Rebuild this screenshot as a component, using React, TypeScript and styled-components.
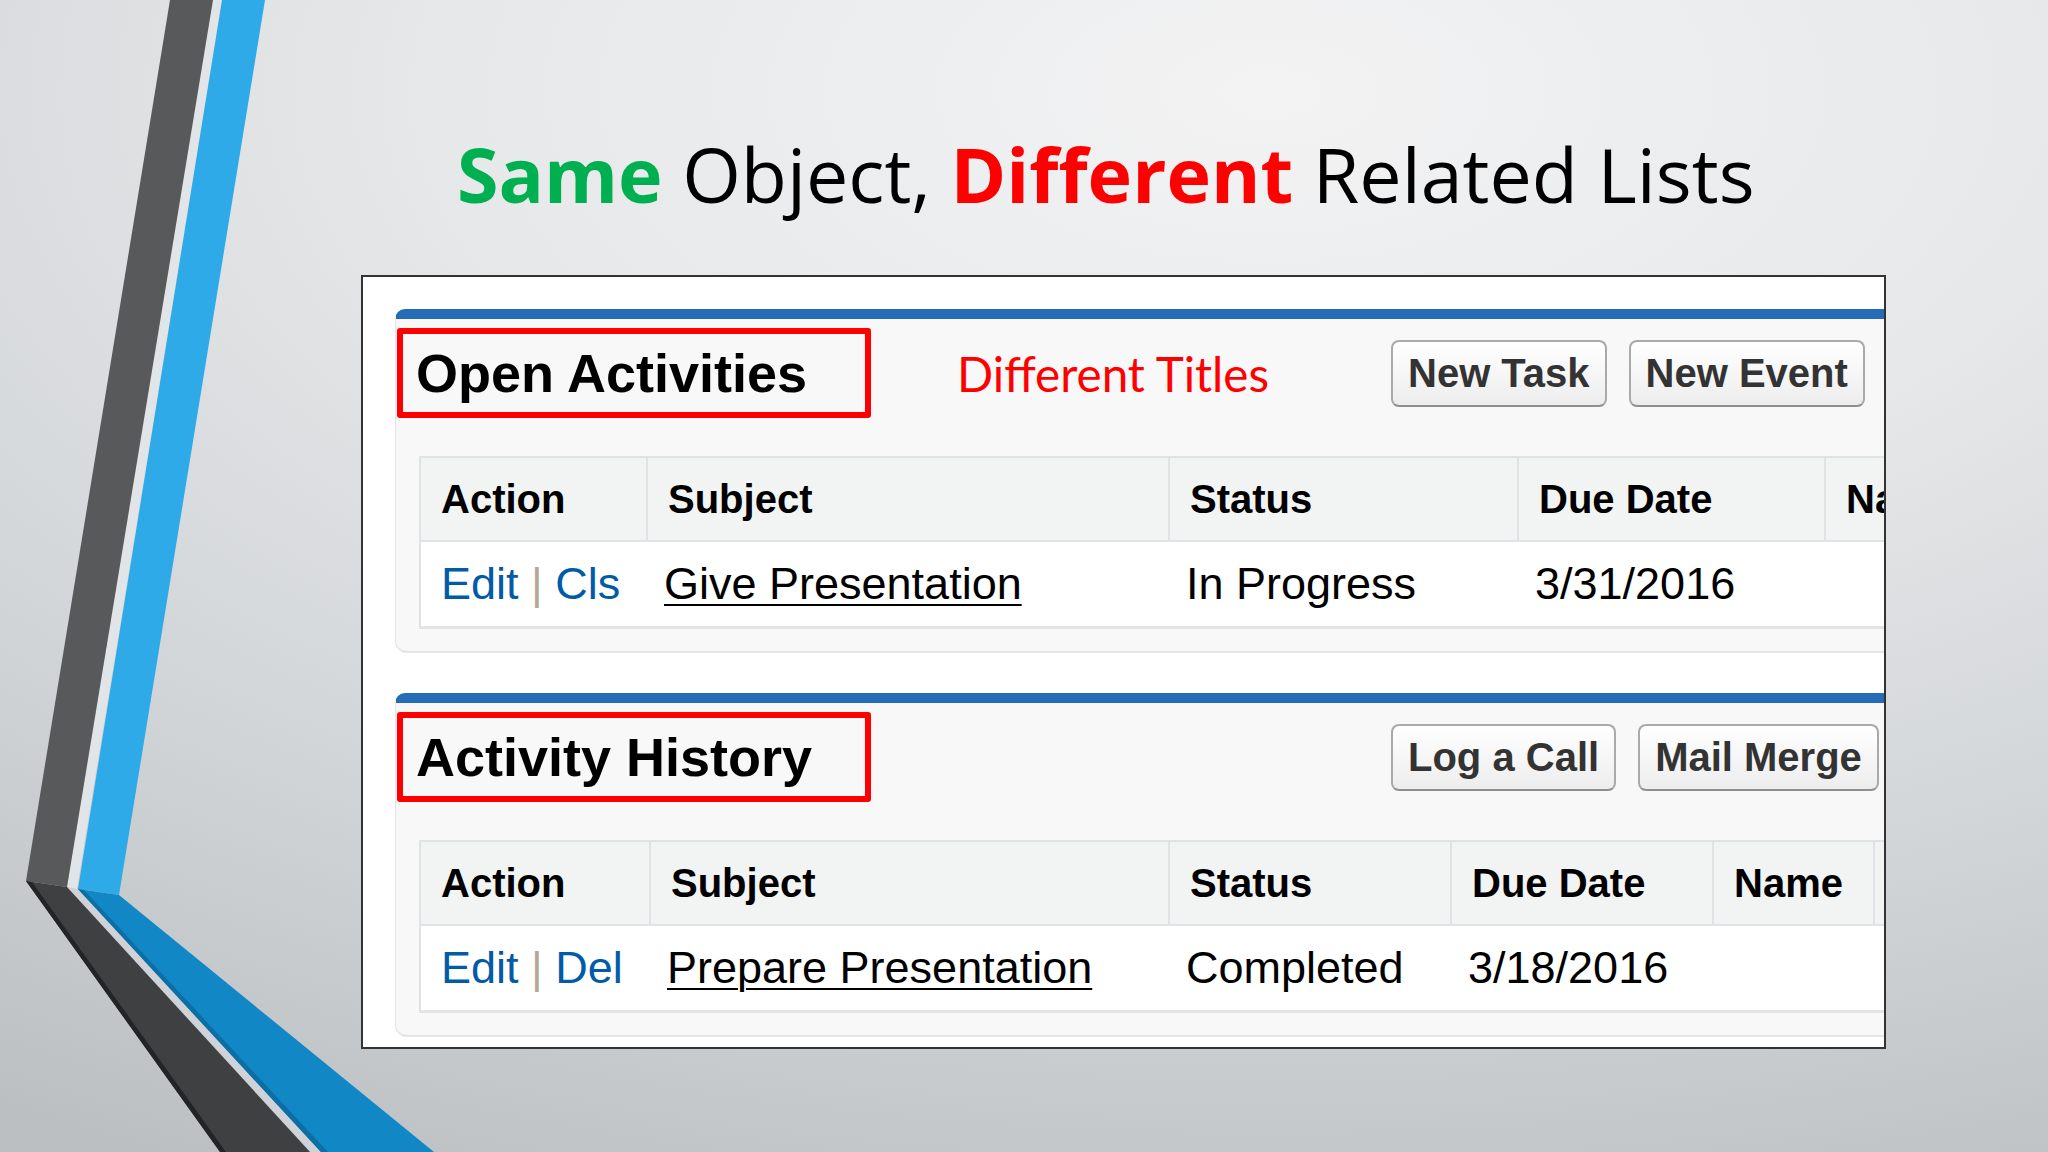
import React from 'react';
import styled, { createGlobalStyle } from 'styled-components';

const ARIAL = '"Liberation Sans", Arial, sans-serif';

const GlobalStyle = createGlobalStyle`
  html, body {
    margin: 0;
    padding: 0;
    overflow: hidden;
  }
  body {
    font-family: ${ARIAL};
  }
`;

const Slide = styled.div`
  position: relative;
  width: 2048px;
  height: 1152px;
  overflow: hidden;
  background: radial-gradient(ellipse 115% 105% at 62% 8%, #f3f3f4 0%, #e6e8e9 35%, #d2d5d8 68%, #bcbfc2 100%);
`;

const Stripes = styled.svg`
  position: absolute;
  left: 0;
  top: 0;
`;

const Content = styled.div`
  position: relative;
  padding: 124px 0 0 361px;
`;

const Title = styled.h1`
  margin: 0;
  padding-left: 96px;
  height: 100px;
  font-family: "Open Sans", "Noto Sans", sans-serif;
  font-size: 75.4px;
  font-weight: 400;
  line-height: 100px;
  color: #000;
  white-space: nowrap;
`;

const Accent = styled.span<{ $color: string }>`
  font-weight: 700;
  color: ${({ $color }) => $color};
`;

const Panel = styled.div`
  margin-top: 51px;
  width: 1525px;
  height: 774px;
  box-sizing: border-box;
  padding: 32px 0 0 32px;
  background: #fff;
  border: 2px solid #333;
  overflow: hidden;
`;

const Section = styled.div`
  width: 1600px;
  margin-bottom: 40px;
  padding-bottom: 22px;
  background: #f8f8f8;
  border-top: 10px solid #246cb8;
  border-left: 1px solid #e2e4e6;
  border-bottom: 2px solid #e2e4e6;
  border-radius: 10px 0 0 12px;
`;

const TitleBar = styled.div`
  display: flex;
  align-items: center;
  height: 90px;
  margin-top: 9px;
`;

const TitleCell = styled.div`
  flex: 0 0 994px;
  display: flex;
  align-items: center;
  padding-left: 1px;
`;

const Highlight = styled.div`
  box-sizing: border-box;
  width: 474px;
  height: 90px;
  padding-left: 13px;
  display: flex;
  align-items: center;
  border: 6px solid #ff0000;
  border-radius: 3px;
`;

const SectionTitle = styled.h2`
  margin: 0;
  font-family: ${ARIAL};
  font-size: 54px;
  font-weight: 700;
  color: #000;
  white-space: nowrap;
`;

const Note = styled.span`
  margin-left: 86px;
  font-family: Lato, "Open Sans", sans-serif;
  font-size: 47.6px;
  color: #ff0000;
  white-space: nowrap;
`;

const ButtonGroup = styled.div`
  display: flex;
  gap: 22px;
`;

const Button = styled.button`
  height: 67px;
  padding: 0 15px;
  font-family: ${ARIAL};
  font-size: 40px;
  line-height: 1;
  font-weight: 700;
  color: #333;
  background: linear-gradient(#ffffff, #ededed);
  border: 2px solid #aaaaaa;
  border-bottom-color: #8f8f8f;
  border-radius: 8px;
  white-space: nowrap;
`;

const Table = styled.div`
  margin: 38px 0 0 23px;
  border-top: 2px solid #e0e3e5;
  border-left: 2px solid #e0e3e5;
`;

const Row = styled.div<{ $cols: string; $head?: boolean }>`
  display: grid;
  grid-template-columns: ${({ $cols }) => $cols};
  height: ${({ $head }) => ($head ? '82px' : '84px')};
  background: ${({ $head }) => ($head ? '#f2f3f3' : '#fff')};
  border-bottom: ${({ $head }) => ($head ? '2px solid #e0e3e5' : '3px solid #e4e4e4')};
`;

const HeadCell = styled.div`
  display: flex;
  align-items: center;
  padding-left: 20px;
  font-size: 40px;
  font-weight: 700;
  color: #000;
  white-space: nowrap;
  & + & {
    border-left: 2px solid #e0e3e5;
  }
`;

const Cell = styled.div<{ $pad?: number }>`
  display: flex;
  align-items: center;
  padding-left: ${({ $pad }) => $pad ?? 18}px;
  font-size: 45px;
  color: #000;
  white-space: nowrap;
`;

const Actions = styled.span`
  white-space: pre;
`;

const ActionLink = styled.span`
  color: #015ba7;
`;

const Pipe = styled.span`
  color: #b3a797;
`;

const SubjectLink = styled.span`
  color: #000;
  text-decoration: underline;
  text-decoration-thickness: 2px;
  text-underline-offset: 5px;
`;

type ListProps = {
  title: string;
  note?: string;
  buttons: string[];
  cols: string;
  headers: string[];
  second: string;
  subject: string;
  status: string;
  due: string;
};

const RelatedList = ({ title, note, buttons, cols, headers, second, subject, status, due }: ListProps) => (
  <Section>
    <TitleBar>
      <TitleCell>
        <Highlight>
          <SectionTitle>{title}</SectionTitle>
        </Highlight>
        {note && <Note>{note}</Note>}
      </TitleCell>
      <ButtonGroup>
        {buttons.map((b) => (
          <Button key={b}>{b}</Button>
        ))}
      </ButtonGroup>
    </TitleBar>
    <Table>
      <Row $cols={cols} $head>
        {headers.map((h, i) => (
          <HeadCell key={i}>{h}</HeadCell>
        ))}
      </Row>
      <Row $cols={cols}>
        <Cell $pad={20}>
          <Actions>
            <ActionLink>Edit</ActionLink>{' '}<Pipe>|</Pipe>{' '}<ActionLink>{second}</ActionLink>
          </Actions>
        </Cell>
        <Cell>
          <SubjectLink>{subject}</SubjectLink>
        </Cell>
        <Cell>{status}</Cell>
        <Cell>{due}</Cell>
        <Cell />
        <Cell />
      </Row>
    </Table>
  </Section>
);

const App = () => (
  <>
    <GlobalStyle />
    <Slide>
      <Stripes width="520" height="1152" viewBox="0 0 520 1152">
        <polygon points="213,0 222,0 77,889 67,887" fill="#e2e5e8" />
        <polygon points="67,887 77,889 321,1152 310,1152" fill="#cfd3d7" />
        <polygon points="170,0 213,0 67,887 26,881" fill="#57595b" />
        <polygon points="26,881 67,887 310,1152 220,1152" fill="#3e4042" />
        <polygon points="26,881 32,882 226,1152 220,1152" fill="#232425" />
        <polygon points="222,0 265,0 119,895 78,889" fill="#2faae8" />
        <polygon points="78,889 119,895 434,1152 321,1152" fill="#1287c6" />
        <polygon points="78,889 84,890 328,1152 321,1152" fill="#0b6fa6" />
      </Stripes>
      <Content>
        <Title>
          <Accent $color="#00b050">Same</Accent> Object, <Accent $color="#ff0000">Different</Accent> Related Lists
        </Title>
        <Panel>
          <RelatedList
            title="Open Activities"
            note="Different Titles"
            buttons={['New Task', 'New Event']}
            cols="225px 522px 349px 307px 260px 200px"
            headers={['Action', 'Subject', 'Status', 'Due Date', 'Name', '']}
            second="Cls"
            subject="Give Presentation"
            status="In Progress"
            due="3/31/2016"
          />
          <RelatedList
            title="Activity History"
            buttons={['Log a Call', 'Mail Merge']}
            cols="228px 519px 282px 262px 161px 300px"
            headers={['Action', 'Subject', 'Status', 'Due Date', 'Name', '']}
            second="Del"
            subject="Prepare Presentation"
            status="Completed"
            due="3/18/2016"
          />
        </Panel>
      </Content>
    </Slide>
  </>
);

export default App;
